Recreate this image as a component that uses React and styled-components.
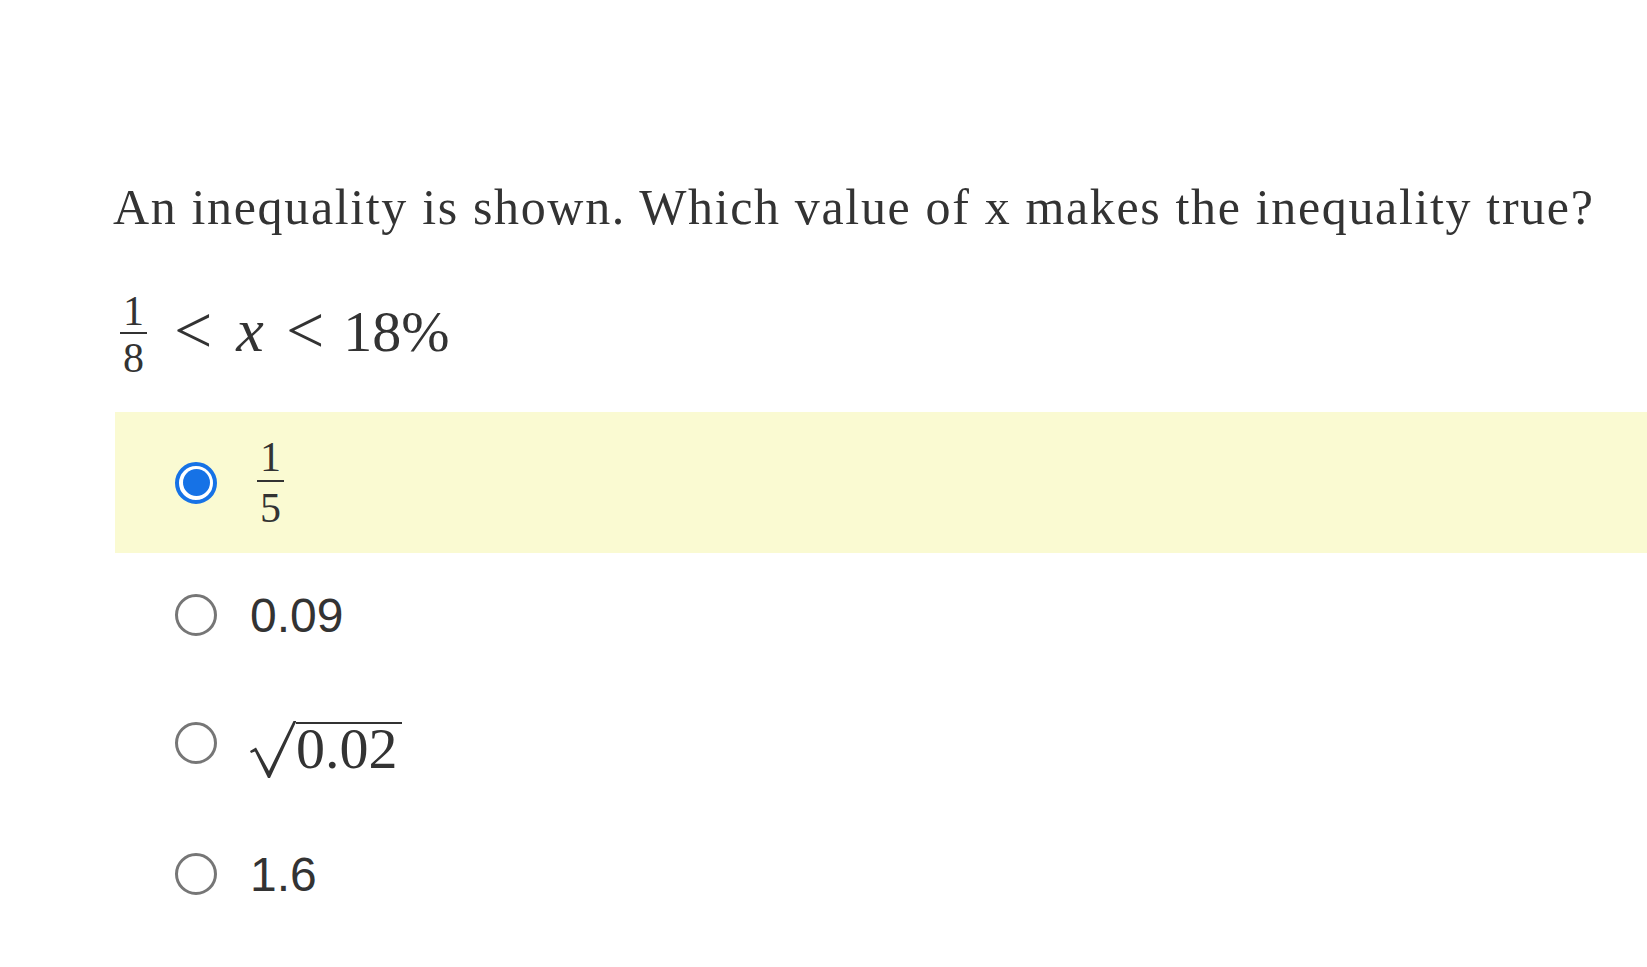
import React from 'react';
import styled, { createGlobalStyle } from 'styled-components';

const GlobalStyle = createGlobalStyle`
  html, body {
    margin: 0;
    padding: 0;
    background: #ffffff;
  }
`;

const Page = styled.div`
  padding-top: 177px;
  padding-left: 113px;
  color: #333333;
`;

const Question = styled.p`
  margin: 0;
  font-family: "Liberation Serif", serif;
  font-size: 50px;
  line-height: 60px;
  letter-spacing: 1.65px;
  white-space: nowrap;
`;

const MathLine = styled.div`
  margin-top: 53px;
  font-family: "Liberation Serif", serif;
  font-size: 58px;
  line-height: 1;
  white-space: nowrap;
`;

const Frac = styled.span`
  display: inline-flex;
  flex-direction: column;
  align-items: center;
  vertical-align: 26px;
  margin: 0 ${(p) => p.$space || 0}px 0 7px;
  font-family: "Liberation Serif", serif;
  font-size: 42px;
  line-height: 42px;
`;

const Num = styled.span`
  display: block;
  padding: 0 3px ${(p) => p.$gap || 0}px;
`;

const Bar = styled.span`
  display: block;
  align-self: stretch;
  height: 2px;
  background: #333333;
`;

const Den = styled.span`
  display: block;
  padding: ${(p) => 3 + (p.$gap || 0)}px 3px 0;
`;

const Rel = styled.span`
  display: inline-block;
  margin: 0 ${(p) => p.$right ?? 24}px 0 ${(p) => p.$left ?? 24}px;
  font-size: 68px;
  vertical-align: -2px;
`;

const Var = styled.i`
  font-style: italic;
  font-size: 62px;
`;

const Options = styled.div`
  margin-top: 33px;
  margin-left: 2px;
`;

const Option = styled.label`
  display: flex;
  align-items: center;
  height: ${(p) => p.$h}px;
  padding-left: 60px;
  background: ${(p) => (p.$selected ? '#fafad2' : 'transparent')};
  cursor: pointer;
`;

const Radio = styled.span`
  flex: none;
  box-sizing: border-box;
  width: 42px;
  height: 42px;
  margin-right: 33px;
  border-radius: 50%;
  border: ${(p) => (p.$checked ? '4px solid #1672e6' : '3px solid #767676')};
  background: #ffffff;
  display: flex;
  align-items: center;
  justify-content: center;

  &::after {
    content: '';
    display: ${(p) => (p.$checked ? 'block' : 'none')};
    width: 27px;
    height: 27px;
    border-radius: 50%;
    background: #1672e6;
  }
`;

const PlainAnswer = styled.span`
  font-family: "Liberation Sans", Arial, sans-serif;
  font-size: 48px;
  color: #333333;
`;

const Sqrt = styled.span`
  display: inline-flex;
  align-items: flex-start;
  margin-top: 12px;
  color: #333333;

  svg {
    display: block;
    flex: none;
  }
`;

const Radicand = styled.span`
  display: block;
  border-top: 2px solid #333333;
  margin-top: 1px;
  padding-right: 4px;
  font-family: "Liberation Serif", serif;
  font-size: 58px;
  line-height: 50px;
`;

const Fraction = ({ top, bottom, space, gap }) => (
  <Frac $space={space}>
    <Num $gap={gap}>{top}</Num>
    <Bar />
    <Den $gap={gap}>{bottom}</Den>
  </Frac>
);

const RadicalSign = () => (
  <svg width="46" height="57" viewBox="0 0 46 57">
    <path
      d="M0 30 L6 26.5 L19 50 L43.5 0 L46 0 L46 1 L20 57 L18 57 L5 30.5 L1 32 Z"
      fill="#333333"
    />
  </svg>
);

const answers = [
  { id: 'a', h: 141, selected: true, content: <Fraction top="1" bottom="5" gap={2} /> },
  { id: 'b', h: 124, content: <PlainAnswer>0.09</PlainAnswer> },
  {
    id: 'c',
    h: 132,
    content: (
      <Sqrt>
        <RadicalSign />
        <Radicand>0.02</Radicand>
      </Sqrt>
    ),
  },
  { id: 'd', h: 130, content: <PlainAnswer>1.6</PlainAnswer> },
];

const App = () => {
  return (
    <>
      <GlobalStyle />
      <Page>
        <Question>
          An inequality is shown. Which value of x makes the inequality true?
        </Question>

        <MathLine>
          <Fraction top="1" bottom="8" space={3} />
          <Rel>&lt;</Rel>
          <Var>x</Var>
          <Rel $left={22} $right={19}>&lt;</Rel>
          18%
        </MathLine>

        <Options>
          {answers.map((a) => (
            <Option key={a.id} $h={a.h} $selected={a.selected}>
              <Radio $checked={a.selected} />
              {a.content}
            </Option>
          ))}
        </Options>
      </Page>
    </>
  );
};

export default App;
